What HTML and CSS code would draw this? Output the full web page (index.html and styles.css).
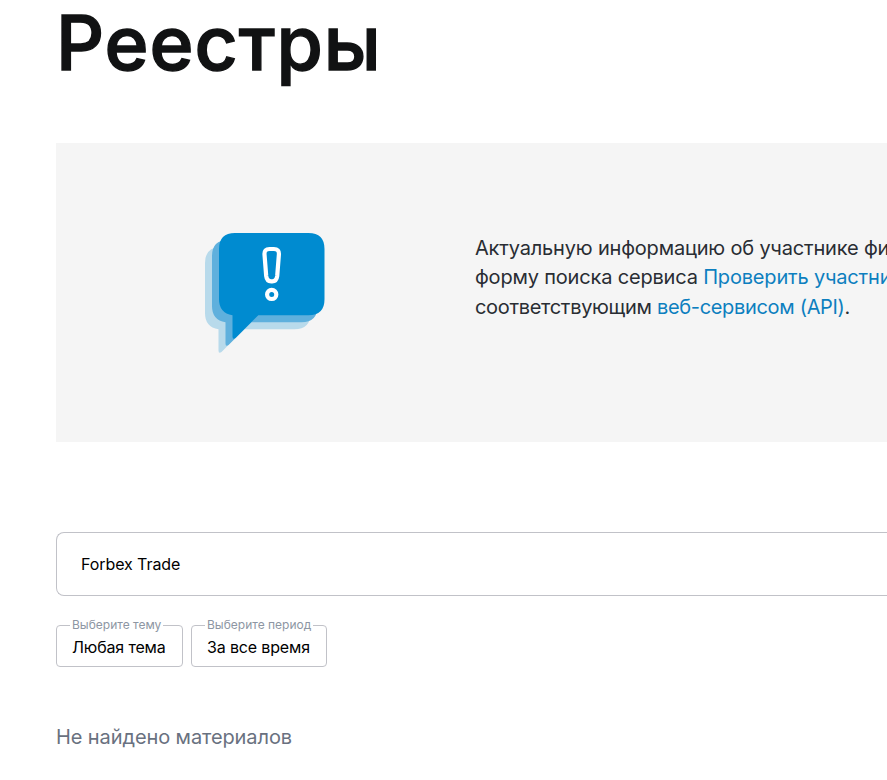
FILE: index.html
```html
<!DOCTYPE html>
<html lang="ru">
<head>
    <meta charset="UTF-8">
    <meta name="viewport" content="width=device-width, initial-scale=1.0">
    <title>Реестры</title>
    <link rel="stylesheet" href="styles.css">
</head>
<body>
    <div class="page">
        <h1 class="title">Реестры</h1>
        <div class="banner">
            <div class="banner-icon">
                <svg width="120" height="120" viewBox="0 0 120 120">
                    <defs>
                        <path id="bubble" d="M30 0H103.500Q119.500 0 119.500 16V66.300Q119.500 82.300 103.500 82.300H53.300L30.500 105Q27.500 107 27.500 103.500V82.300Q14 80 14 66.300V16Q14 0 30 0Z"/>
                    </defs>
                    <use href="#bubble" x="-14" y="14" fill="#b8daeb"/>
                    <use href="#bubble" x="-7" y="7" fill="#5fb0dd"/>
                    <use href="#bubble" fill="#008bd0"/>
                    <g fill="none" stroke="#fff" stroke-width="4.200">
                        <path d="M64.500 16H68.900Q74.300 16 73.900 21.500L72.200 43Q71.600 48.300 67.200 48.300H66.200Q61.800 48.300 61.200 43L59.500 21.500Q59.100 16 64.500 16Z"/>
                        <circle cx="66.700" cy="61.400" r="4.600"/>
                    </g>
                </svg>
            </div>
            <div class="banner-text">
                Актуальную информацию об участнике финансового<br>
                форму поиска сервиса <a href="#">Проверить участника</a><br>
                <span class="narrow">соответствующим <a href="#">веб-сервисом (API)</a>.</span>
            </div>
        </div>
        <input class="search" type="text" value="Forbex Trade">
        <div class="filters">
            <fieldset class="filter theme">
                <legend>Выберите тему</legend>
                <span>Любая тема</span>
            </fieldset>
            <fieldset class="filter period">
                <legend>Выберите период</legend>
                <span>За все время</span>
            </fieldset>
        </div>
        <div class="empty">Не найдено материалов</div>
    </div>
</body>
</html>
```
FILE: styles.css
```css
*{
    box-sizing: border-box;
}
body{
    margin: 0;
    height: 780px;
    overflow: hidden;
    background: #fff;
    font-family: Inter, "Liberation Sans", sans-serif;
}
.page{
    padding-left: 56px;
}
.title{
    margin: 0;
    height: 143px;
    font-size: 75px;
    font-weight: 500;
    line-height: 85px;
    letter-spacing: 0.900px;
    color: #111213;
    -webkit-text-stroke: 1.400px #111213;
}
.banner{
    display: flex;
    height: 299px;
    background: #f5f5f5;
    overflow: hidden;
}
.banner-icon{
    flex: none;
    width: 419px;
    padding: 90px 0 0 149px;
}
.banner-text{
    padding-top: 90.600px;
    font-size: 20px;
    line-height: 29.600px;
    letter-spacing: -0.180px;
    white-space: nowrap;
    color: #292d33;
}
.banner-text a{
    color: #0d7fbf;
    text-decoration: none;
}
.narrow{
    letter-spacing: -0.320px;
}
.search{
    display: block;
    width: 100%;
    height: 64px;
    margin-top: 90px;
    padding: 0 24px;
    border: 1px solid #c1c2c8;
    border-right: 0;
    border-radius: 8px 0 0 8px;
    outline: 0;
    font-family: inherit;
    font-size: 16px;
    letter-spacing: -0.080px;
    color: #000;
}
.filters{
    display: flex;
    gap: 8px;
    margin-top: 22px;
}
.filter{
    height: 49px;
    min-width: 0;
    margin: 0;
    padding: 0 0 0 13px;
    border: 1px solid #c1c2c8;
    border-radius: 4px;
    white-space: nowrap;
}
.filter legend{
    padding: 0 2px;
    font-size: 12px;
    line-height: 14px;
    color: #8d96a3;
}
.filter span{
    display: block;
    padding: 6px 0 0 2px;
    font-size: 16px;
    line-height: 18px;
    letter-spacing: -0.150px;
}
.theme{
    width: 127px;
}
.period{
    width: 136px;
}
.empty{
    margin-top: 55px;
    font-size: 20px;
    line-height: 30px;
    letter-spacing: -0.100px;
    color: #697180;
}
```
